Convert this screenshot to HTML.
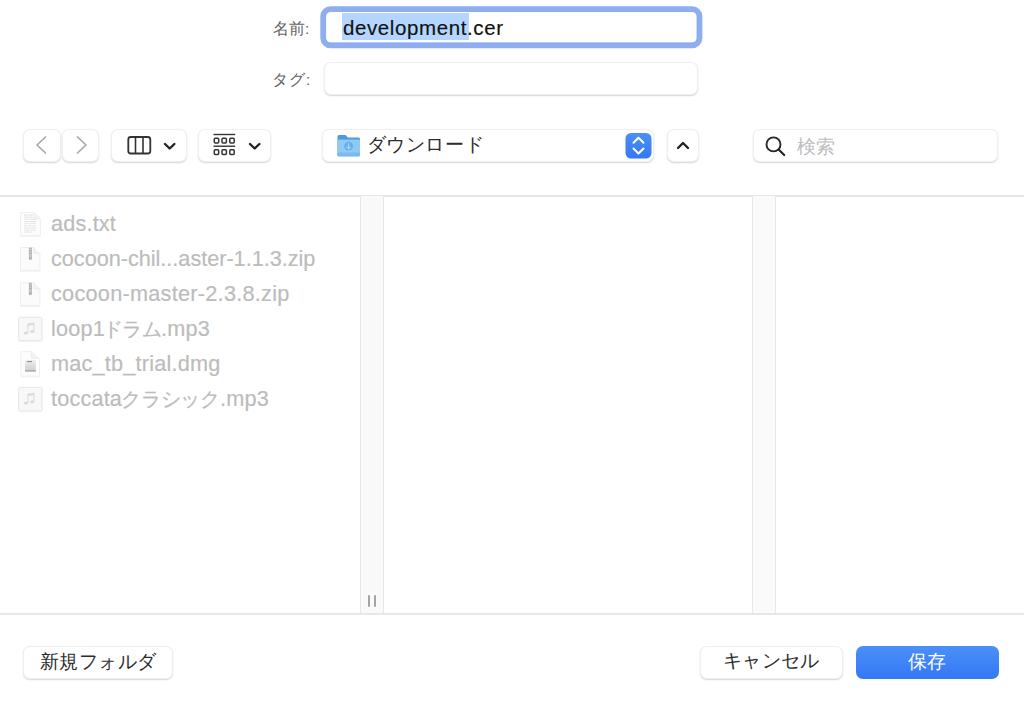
<!DOCTYPE html>
<html><head><meta charset="utf-8">
<style>
html,body{margin:0;padding:0;}
body{width:1024px;height:706px;position:relative;overflow:hidden;background:#fff;font-family:"Liberation Sans",sans-serif;color:#222;}
.a{position:absolute;}
.btn{position:absolute;box-sizing:border-box;background:#fff;border:1px solid rgba(0,0,0,0.06);border-radius:7px;box-shadow:0 1px 1.5px rgba(0,0,0,0.17);}
.lbl{position:absolute;font-size:15.5px;color:#636363;white-space:nowrap;}
.file{position:absolute;left:51px;font-size:21.7px;letter-spacing:0.16px;color:#bcbcbc;white-space:nowrap;line-height:24px;-webkit-text-stroke:0.2px #bcbcbc;}
.ico{position:absolute;}
.jp{font-size:20px;letter-spacing:-0.6px;margin-left:-2px;}
.jp2{font-size:20px;letter-spacing:-0.2px;margin-left:-1px;}
</style></head><body>

<!-- name row -->
<div class="lbl" style="left:273px;top:19px;">名前:</div>
<svg class="ico" style="left:300px;top:0" width="420" height="60" viewBox="300 0 420 60">
  <rect x="323.05" y="8.95" width="376.6" height="36.5" rx="7.5" fill="#fff" stroke="#8eaef0" stroke-width="5.5"/>
  <rect x="325.6" y="11.5" width="371.5" height="31.4" rx="5" fill="none" stroke="#86a6ec" stroke-width="0.8"/>
</svg>
<div class="a" style="left:342px;top:13px;width:127px;height:27px;background:#b3d5fe;"></div>
<div class="a" style="left:343px;top:14.6px;font-size:20.5px;letter-spacing:0.6px;color:#111;line-height:26px;white-space:nowrap;-webkit-text-stroke:0.15px #111;">development.cer</div>

<!-- tag row -->
<div class="lbl" style="left:272.3px;top:70px;letter-spacing:0.8px;">タグ:</div>
<div class="btn" style="left:324px;top:62px;width:374px;height:33px;border-radius:7px;"></div>

<!-- toolbar -->
<div class="btn" style="left:23px;top:129px;width:38px;height:33px;"></div>
<div class="btn" style="left:62px;top:129px;width:37px;height:33px;"></div>
<svg class="ico" style="left:0;top:0" width="1024" height="200">
  <path d="M45.5 137 L37 145 L45.5 153" fill="none" stroke="#a9a9a9" stroke-width="1.7" stroke-linecap="round" stroke-linejoin="round"/>
  <path d="M77.5 137 L86 145 L77.5 153" fill="none" stroke="#a9a9a9" stroke-width="1.7" stroke-linecap="round" stroke-linejoin="round"/>
</svg>

<div class="btn" style="left:111px;top:129px;width:76px;height:33px;"></div>
<div class="btn" style="left:198px;top:129px;width:73px;height:33px;"></div>

<div class="btn" style="left:322px;top:129px;width:332px;height:33px;"></div>
<div class="btn" style="left:667px;top:129px;width:32px;height:33px;"></div>
<div class="btn" style="left:753px;top:129px;width:245px;height:33px;"></div>

<svg class="ico" style="left:0;top:0" width="1024" height="200">
  <!-- column icon -->
  <rect x="128.3" y="137" width="22" height="16.5" rx="2.5" fill="none" stroke="#333" stroke-width="1.8"/>
  <line x1="135.5" y1="137" x2="135.5" y2="153.5" stroke="#333" stroke-width="1.6"/>
  <line x1="143" y1="137" x2="143" y2="153.5" stroke="#333" stroke-width="1.6"/>
  <path d="M165 144 L169.7 148.5 L174.4 144" fill="none" stroke="#222" stroke-width="2.4" stroke-linecap="round" stroke-linejoin="round"/>
  <!-- gallery icon -->
  <line x1="213.5" y1="134.5" x2="235.2" y2="134.5" stroke="#333" stroke-width="1.4"/>
  <line x1="213.5" y1="146.2" x2="235.2" y2="146.2" stroke="#333" stroke-width="1.4"/>
  <g fill="none" stroke="#333" stroke-width="1.5">
    <rect x="214.3" y="138.3" width="4.4" height="4.6" rx="1"/>
    <rect x="222" y="138.3" width="4.4" height="4.6" rx="1"/>
    <rect x="229.8" y="138.3" width="4.4" height="4.6" rx="1"/>
    <rect x="214.3" y="149.8" width="4.4" height="4.6" rx="1"/>
    <rect x="222" y="149.8" width="4.4" height="4.6" rx="1"/>
    <rect x="229.8" y="149.8" width="4.4" height="4.6" rx="1"/>
  </g>
  <path d="M250 144 L254.7 148.5 L259.4 144" fill="none" stroke="#222" stroke-width="2.4" stroke-linecap="round" stroke-linejoin="round"/>
  <!-- folder -->
  <path d="M337.5 136.5 Q337.5 135 339 135 L345.5 135 L347.8 137.4 L358.5 137.4 Q360 137.4 360 139 L360 155 Q360 156.3 358.7 156.3 L338.8 156.3 Q337.5 156.3 337.5 155 Z" fill="#4f97de"/>
  <rect x="337.5" y="139.6" width="22.5" height="16.7" rx="1.3" fill="#8dcaf6"/>
  <rect x="337.5" y="152.5" width="22.5" height="3.8" rx="1.3" fill="#7cb9ec"/>
  <circle cx="348.6" cy="146.2" r="4.4" fill="#6aaee6"/>
  <path d="M348.6 143.2 L348.6 148.6 M346.6 146.8 L348.6 148.8 L350.6 146.8" fill="none" stroke="#a8d8fa" stroke-width="1.1"/>
  <!-- stepper -->
  <defs><linearGradient id="bg" x1="0" y1="0" x2="0" y2="1"><stop offset="0" stop-color="#4b8ff7"/><stop offset="1" stop-color="#3478f6"/></linearGradient></defs>
  <rect x="625.5" y="133" width="26" height="25.5" rx="5.5" fill="url(#bg)"/>
  <path d="M633.5 142.8 L638.5 137.8 L643.5 142.8" fill="none" stroke="#fff" stroke-width="2" stroke-linecap="round" stroke-linejoin="round"/>
  <path d="M633.5 148.5 L638.5 153.5 L643.5 148.5" fill="none" stroke="#fff" stroke-width="2" stroke-linecap="round" stroke-linejoin="round"/>
  <!-- up -->
  <path d="M678 148 L683 143 L688 148" fill="none" stroke="#222" stroke-width="2.4" stroke-linecap="round" stroke-linejoin="round"/>
  <!-- search -->
  <circle cx="773.5" cy="144.4" r="7" fill="none" stroke="#262626" stroke-width="1.9"/>
  <path d="M778.6 149.5 L784.2 155" stroke="#262626" stroke-width="2.2" stroke-linecap="round"/>
</svg>
<div class="a" style="left:366.5px;top:131.5px;font-size:19.2px;letter-spacing:0.65px;color:#2c2c2c;white-space:nowrap;">ダウンロード</div>
<div class="a" style="left:797px;top:134px;font-size:18.5px;color:#bdbdbd;white-space:nowrap;">検索</div>

<!-- browser -->
<div class="a" style="left:0;top:195px;width:1024px;height:1.5px;background:#e7e7e7;"></div>
<div class="a" style="left:0;top:613px;width:1024px;height:1.5px;background:#e7e7e7;"></div>
<div class="a" style="left:360px;top:196px;width:24px;height:417px;box-sizing:border-box;background:#f9f9f9;border-left:1.5px solid #e6e6e6;border-right:1.5px solid #e6e6e6;"></div>
<div class="a" style="left:752px;top:196px;width:24px;height:417px;box-sizing:border-box;background:#fafafa;border-left:1.5px solid #e7e7e7;border-right:1.5px solid #e7e7e7;"></div>
<div class="a" style="left:368px;top:595px;width:2px;height:12px;background:#a3a3a3;border-radius:1px;"></div>
<div class="a" style="left:374px;top:595px;width:2px;height:12px;background:#a3a3a3;border-radius:1px;"></div>

<svg class="ico" style="left:0;top:200px" width="60" height="220" viewBox="0 200 60 220">
  <defs>
    <filter id="sh" x="-20%" y="-20%" width="140%" height="140%"><feDropShadow dx="0" dy="0.6" stdDeviation="0.5" flood-color="#000" flood-opacity="0.10"/></filter>
    <linearGradient id="drv" x1="0" y1="0" x2="0" y2="1"><stop offset="0" stop-color="#eeeeee"/><stop offset="1" stop-color="#cdcdcd"/></linearGradient>
  </defs>
  <!-- txt -->
  <path d="M20.6 212.6 H34.2 L40.3 218.7 V235.4 H20.6 Z" fill="#fdfdfd" stroke="#ececec" stroke-width="0.8" filter="url(#sh)"/>
  <path d="M34.2 212.6 V218.7 H40.3" fill="#f3f3f3" stroke="#e8e8e8" stroke-width="0.6"/>
  <g fill="#e4e4e4">
    <rect x="24.1" y="214.4" width="3" height="1.3"/><rect x="28" y="214.4" width="5" height="1.3"/>
    <rect x="24.1" y="216.7" width="9.5" height="0.9"/>
    <rect x="24.1" y="218.7" width="5" height="1"/><rect x="30" y="218.7" width="6.2" height="1"/>
    <rect x="24.1" y="221" width="12" height="1.1"/>
    <rect x="24.1" y="223.2" width="4" height="0.9"/><rect x="29" y="223.2" width="7" height="0.9"/>
    <rect x="24.1" y="225.3" width="3" height="1.1"/><rect x="28" y="225.3" width="3.5" height="1.1"/><rect x="32.5" y="225.3" width="3.5" height="1.1"/>
    <rect x="24.1" y="227.6" width="12" height="1"/>
    <rect x="24.1" y="229.7" width="6" height="1"/><rect x="31" y="229.7" width="5" height="1"/>
    <rect x="24.1" y="231.6" width="8" height="0.9"/>
  </g>
  <!-- zip 1 -->
  <path d="M20.5 247.5 H33.8 L39.8 253.5 V270.3 H20.5 Z" fill="#fbfbfb" stroke="#ededed" stroke-width="0.8" filter="url(#sh)"/>
  <path d="M33.8 247.5 V253.5 H39.8" fill="#f1f1f1" stroke="#e6e6e6" stroke-width="0.6"/>
  <rect x="28.9" y="247.5" width="3" height="12.3" rx="0.8" fill="#b3b3b3"/>
  <rect x="29.6" y="249" width="1.6" height="1" fill="#d8d8d8"/>
  <rect x="29.6" y="251.5" width="1.6" height="1" fill="#d8d8d8"/>
  <rect x="29.6" y="254" width="1.6" height="3" fill="#cfcfcf"/>
  <!-- zip 2 -->
  <path d="M20.5 282.7 H33.8 L39.8 288.7 V305.5 H20.5 Z" fill="#fbfbfb" stroke="#ededed" stroke-width="0.8" filter="url(#sh)"/>
  <path d="M33.8 282.7 V288.7 H39.8" fill="#f1f1f1" stroke="#e6e6e6" stroke-width="0.6"/>
  <rect x="28.9" y="282.7" width="3" height="12.3" rx="0.8" fill="#b3b3b3"/>
  <rect x="29.6" y="284.2" width="1.6" height="1" fill="#d8d8d8"/>
  <rect x="29.6" y="286.7" width="1.6" height="1" fill="#d8d8d8"/>
  <rect x="29.6" y="289.2" width="1.6" height="3" fill="#cfcfcf"/>
  <!-- mp3 1 -->
  <rect x="18.7" y="317.3" width="23.4" height="23.2" rx="1.5" fill="#f8f8f8" stroke="#e6e6e6" stroke-width="0.9" filter="url(#sh)"/>
  <g fill="#dadada">
    <path d="M28 323.6 L34.2 322.6 V324.8 L28 325.8 Z"/>
    <rect x="27.4" y="323.8" width="1" height="9"/>
    <rect x="33.5" y="322.8" width="1" height="8.6"/>
    <ellipse cx="26" cy="333" rx="2.1" ry="1.5"/>
    <ellipse cx="32.2" cy="331.6" rx="2.1" ry="1.5"/>
  </g>
  <!-- dmg -->
  <path d="M21.1 351.4 H31.4 L39.5 359.5 V376 H21.1 Z" fill="#fdfdfd" stroke="#ececec" stroke-width="0.8" filter="url(#sh)"/>
  <path d="M31.4 351.4 V358.2 H39.5" fill="#f3f3f3" stroke="#e6e6e6" stroke-width="0.6"/>
  <rect x="25" y="359.9" width="10.8" height="11.8" rx="0.6" fill="url(#drv)"/>
  <rect x="27" y="361" width="5" height="1.1" fill="#909090"/>
  <rect x="25" y="370.1" width="10.8" height="1.4" fill="#adadad"/>
  <!-- mp3 2 -->
  <rect x="18.7" y="387.4" width="23.4" height="23.4" rx="1.5" fill="#f8f8f8" stroke="#e6e6e6" stroke-width="0.9" filter="url(#sh)"/>
  <g fill="#dadada">
    <path d="M28 393.7 L34.2 392.7 V394.9 L28 395.9 Z"/>
    <rect x="27.4" y="393.9" width="1" height="9"/>
    <rect x="33.5" y="392.9" width="1" height="8.6"/>
    <ellipse cx="26" cy="403.1" rx="2.1" ry="1.5"/>
    <ellipse cx="32.2" cy="401.7" rx="2.1" ry="1.5"/>
  </g>
</svg>
<div class="file" style="top:212px;">ads.txt</div>
<div class="file" style="top:247px;letter-spacing:-0.03px;">cocoon-chil...aster-1.1.3.zip</div>
<div class="file" style="top:282px;letter-spacing:0.26px;">cocoon-master-2.3.8.zip</div>
<div class="file" style="top:317px;">loop1<span class="jp">ドラム</span>.mp3</div>
<div class="file" style="top:352px;letter-spacing:0.2px;">mac_tb_trial.dmg</div>
<div class="file" style="top:387px;">toccata<span class="jp2">クラシック</span>.mp3</div>

<!-- bottom buttons -->
<div class="btn" style="left:23px;top:646px;width:150px;height:33px;"></div>
<div class="a" style="left:39.5px;top:648px;font-size:19.3px;letter-spacing:0.5px;color:#2c2c2c;white-space:nowrap;">新規フォルダ</div>
<div class="btn" style="left:700px;top:646px;width:143px;height:33px;"></div>
<div class="a" style="left:723px;top:648px;font-size:19.2px;letter-spacing:0.3px;color:#2c2c2c;white-space:nowrap;">キャンセル</div>
<div class="a" style="left:856px;top:646px;width:142.5px;height:33px;border-radius:7px;background:linear-gradient(#4b8ff7,#3478f6);"></div>
<div class="a" style="left:908px;top:648.5px;font-size:19.2px;color:#fff;white-space:nowrap;">保存</div>

</body></html>
